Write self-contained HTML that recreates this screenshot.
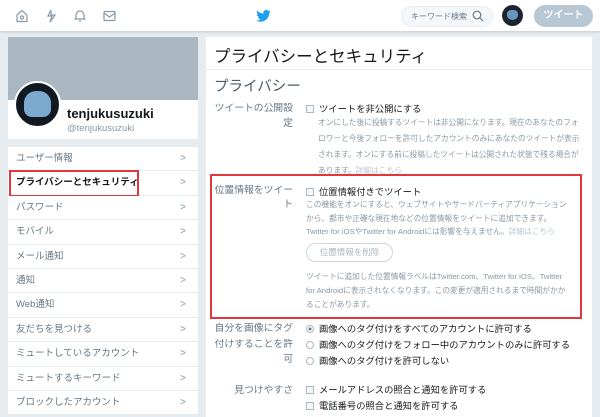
<!DOCTYPE html>
<html><head><meta charset="utf-8"><style>
*{margin:0;padding:0;box-sizing:border-box}
body{width:600px;height:412px;overflow:hidden;background:#e6ecf0;font-family:"Liberation Sans","Noto Sans CJK JP",sans-serif;color:#14171a;position:relative}
.a{position:absolute;white-space:nowrap}
.top{position:absolute;left:0;top:0;width:600px;height:31px;background:#fff;box-shadow:0 1px 3px rgba(0,0,0,.15)}
.card{position:absolute;background:#fff}
.m{position:absolute;left:8px;width:190px;height:24.4px;border-bottom:1px solid #e6ecf0;font-size:9.5px;color:#657786;padding:0 0 0 8px;line-height:23px;background:#fff}
.m span{position:absolute;right:12px;top:0;color:#8899a6;font-size:10px;line-height:23px}
.d{font-size:7.7px;color:#8899a6;line-height:16px}
.o{font-size:9.3px;color:#14171a}
.lb{font-size:9.8px;color:#657786;text-align:right}
.cb{display:inline-block;width:8px;height:8px;border:1px solid #aab8c2;margin-right:5px;vertical-align:-1px;background:#f5f8fa}
.rd{display:inline-block;width:8px;height:8px;border:1px solid #aab8c2;border-radius:50%;margin-right:5px;vertical-align:-1px}
</style></head><body>
<div class="top"></div>
<svg class="a" style="left:15px;top:9px" width="110" height="14" viewBox="0 0 110 14" fill="none" stroke="#8899a6" stroke-width="1.2">
<path d="M2 6 L7 1.5 L12 6 V12.5 H2 Z"/><circle cx="7" cy="8.5" r="1.6"/>
<path d="M36 1 L33 7 H37 L35 13 L40 6 H36 Z"/>
<path d="M61 10 V6 A4 4 0 0 1 69 6 V10 Z M59.5 10 H70.5 M64 12 H66"/>
<rect x="89" y="2.5" width="11" height="9" rx="1"/><path d="M89 4 L94.5 8 L100 4"/>
</svg>
<svg class="a" style="left:256px;top:10px" width="15" height="12" viewBox="0 0 24 20"><path fill="#1da1f2" d="M24 2.4a10 10 0 0 1-2.8.8A5 5 0 0 0 23.3.4a10 10 0 0 1-3.1 1.2A4.9 4.9 0 0 0 11.8 6 14 14 0 0 1 1.7.9a4.9 4.9 0 0 0 1.5 6.6 4.9 4.9 0 0 1-2.2-.6 4.9 4.9 0 0 0 3.9 4.8 4.9 4.9 0 0 1-2.2.1 4.9 4.9 0 0 0 4.6 3.4A9.9 9.9 0 0 1 0 17.3 14 14 0 0 0 7.5 19.5c9 0 14-7.5 14-14v-.6A10 10 0 0 0 24 2.4z"/></svg>
<div class="a" style="left:401px;top:6px;width:92px;height:21px;border-radius:11px;background:#f5f8fa;border:1px solid #e6ecf0"></div>
<div class="a" style="left:411px;top:11px;font-size:8px;color:#657786">キーワード検索</div>
<svg class="a" style="left:472px;top:10px" width="12" height="12" viewBox="0 0 12 12" fill="none" stroke="#657786" stroke-width="1.2"><circle cx="5" cy="5" r="3.8"/><path d="M8 8 L11 11"/></svg>
<div class="a" style="left:502px;top:5px;width:21px;height:21px;border-radius:50%;background:#1b2430"></div>
<div class="a" style="left:507px;top:10px;width:11px;height:10px;background:#7fb3e0;border-radius:40% 40% 50% 50%;opacity:.8"></div>
<div class="a" style="left:534px;top:5px;width:59px;height:22px;border-radius:11px;background:#b7c7d4;color:#fff;font-size:10px;font-weight:bold;text-align:center;line-height:22px">ツイート</div>

<div class="card" style="left:8px;top:37px;width:190px;height:102px"></div>
<div class="a" style="left:8px;top:37px;width:190px;height:63px;background:#aab6c0"></div>
<div class="a" style="left:14px;top:81px;width:47px;height:47px;border-radius:50%;background:#111820;border:2px solid #fff"></div>
<div class="a" style="left:24px;top:91px;width:27px;height:26px;background:#8ec3ef;border-radius:45% 45% 30% 30%;opacity:.85"></div>
<div class="a" style="left:67px;top:106px;font-size:13px;font-weight:bold">tenjukusuzuki</div>
<div class="a" style="left:67px;top:123px;font-size:9.5px;color:#8899a6">@tenjukusuzuki</div>

<div class="m" style="top:147px">ユーザー情報<span>&gt;</span></div>
<div class="m" style="top:171.4px;color:#14171a;font-weight:bold">プライバシーとセキュリティ<span style="font-weight:normal">&gt;</span></div>
<div class="a" style="left:9px;top:170px;width:130px;height:27px;border:2px solid #e0363c"></div>
<div class="m" style="top:195.8px">パスワード<span>&gt;</span></div>
<div class="m" style="top:220.2px">モバイル<span>&gt;</span></div>
<div class="m" style="top:244.6px">メール通知<span>&gt;</span></div>
<div class="m" style="top:269px">通知<span>&gt;</span></div>
<div class="m" style="top:293.4px">Web通知<span>&gt;</span></div>
<div class="m" style="top:317.8px">友だちを見つける<span>&gt;</span></div>
<div class="m" style="top:342.2px">ミュートしているアカウント<span>&gt;</span></div>
<div class="m" style="top:366.6px">ミュートするキーワード<span>&gt;</span></div>
<div class="m" style="top:391px">ブロックしたアカウント<span>&gt;</span></div>

<div class="card" style="left:206px;top:37px;width:386px;height:380px"></div>
<div class="a" style="left:206px;top:69px;width:386px;height:1px;background:#e6ecf0"></div>
<div class="a" style="left:214px;top:43px;font-size:16.5px">プライバシーとセキュリティ</div>
<div class="a" style="left:214px;top:75px;font-size:14.5px;color:#4b5a66">プライバシー</div>

<div class="a lb" style="left:213px;top:101px;width:80px;line-height:15px;white-space:normal">ツイートの公開設定</div>
<div class="a o" style="left:306px;top:101px"><span class="cb"></span>ツイートを非公開にする</div>
<div class="a d" style="left:318px;top:115px">オンにした後に投稿するツイートは非公開になります。現在のあなたのフォ<br>ロワーと今後フォローを許可したアカウントのみにあなたのツイートが表示<br>されます。オンにする前に投稿したツイートは公開された状態で残る場合が<br>あります。<span style="color:#b8c6d2">詳細はこちら</span></div>

<div class="a" style="left:210px;top:174px;width:372px;height:145px;border:2px solid #e0363c"></div>
<div class="a lb" style="left:213px;top:184px;width:80px;line-height:14px;white-space:normal">位置情報をツイート</div>
<div class="a o" style="left:306px;top:184px"><span class="cb"></span>位置情報付きでツイート</div>
<div class="a d" style="left:306px;top:198px;line-height:13.5px">この機能をオンにすると、ウェブサイトやサードパーティアプリケーション<br>から、都市や正確な現在地などの位置情報をツイートに追加できます。<br>Twitter for iOSやTwitter for Androidには影響を与えません。<span style="color:#b8c6d2">詳細はこちら</span></div>
<div class="a" style="left:306px;top:243px;width:87px;height:19px;border:1px solid #ccd6dd;border-radius:10px;font-size:8.5px;color:#aab8c2;text-align:center;line-height:17px">位置情報を削除</div>
<div class="a d" style="left:306px;top:270px;line-height:14px">ツイートに追加した位置情報ラベルはTwitter.com、Twitter for iOS、Twitter<br>for Androidに表示されなくなります。この変更が適用されるまで時間がかか<br>ることがあります。</div>

<div class="a lb" style="left:213px;top:321px;width:80px;line-height:15.5px;white-space:normal">自分を画像にタグ付けすることを許可</div>
<div class="a o" style="left:306px;top:321px;line-height:16px"><span class="rd" style="background:radial-gradient(#657786 30%,#fff 40%)"></span>画像へのタグ付けをすべてのアカウントに許可する<br><span class="rd"></span>画像へのタグ付けをフォロー中のアカウントのみに許可する<br><span class="rd"></span>画像へのタグ付けを許可しない</div>

<div class="a lb" style="left:213px;top:382px;width:80px">見つけやすさ</div>
<div class="a o" style="left:306px;top:382px;line-height:16px"><span class="cb"></span>メールアドレスの照合と通知を許可する<br><span class="cb"></span>電話番号の照合と通知を許可する</div>
</body></html>
